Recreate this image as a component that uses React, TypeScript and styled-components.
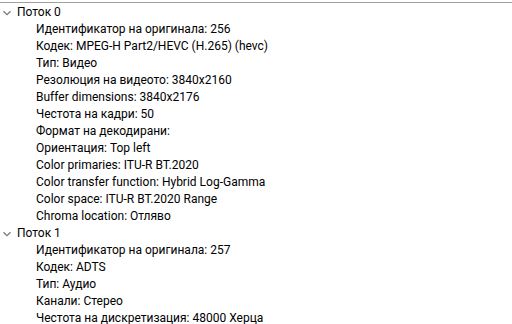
import styled, { createGlobalStyle } from "styled-components";

const GlobalStyle = createGlobalStyle`
  html, body {
    margin: 0;
    padding: 0;
    background: #fff;
  }
  body {
    font-family: Roboto, "Noto Sans", sans-serif;
    font-size: 12px;
    color: #000;
  }
`;

const Tree = styled.div`
  width: 512px;
  height: 324px;
  overflow: hidden;
  box-sizing: border-box;
  border-top: 1px solid #a0a0a0;
  margin-top: 2px;
  padding-top: 1px;
`;

const Node = styled.div<{ $level: number }>`
  display: flex;
  align-items: center;
  height: 17px;
  padding-left: ${(p) => (p.$level === 0 ? 2 : 36)}px;
  white-space: nowrap;
`;

const Toggle = styled.span`
  display: inline-flex;
  align-items: center;
  justify-content: center;
  width: 10px;
  height: 17px;
  margin-right: 5px;
`;

const Label = styled.span`
  line-height: 17px;
`;

type Stream = { title: string; props: string[] };

const streams: Stream[] = [
  {
    title: "Поток 0",
    props: [
      "Идентификатор на оригинала: 256",
      "Кодек: MPEG-H Part2/HEVC (H.265) (hevc)",
      "Тип: Видео",
      "Резолюция на видеото: 3840x2160",
      "Buffer dimensions: 3840x2176",
      "Честота на кадри: 50",
      "Формат на декодирани:",
      "Ориентация: Top left",
      "Color primaries: ITU-R BT.2020",
      "Color transfer function: Hybrid Log-Gamma",
      "Color space: ITU-R BT.2020 Range",
      "Chroma location: Отляво",
    ],
  },
  {
    title: "Поток 1",
    props: [
      "Идентификатор на оригинала: 257",
      "Кодек: ADTS",
      "Тип: Аудио",
      "Канали: Стерео",
      "Честота на дискретизация: 48000 Херца",
    ],
  },
];

const Chevron = () => (
  <svg width="8" height="6" viewBox="0 0 8 6">
    <path d="M0.5 1.2 L4 4.6 L7.5 1.2" fill="none" stroke="#777" strokeWidth="1.2" />
  </svg>
);

export default function App() {
  return (
    <>
      <GlobalStyle />
      <Tree>
        {streams.map((s) => (
          <div key={s.title}>
            <Node $level={0}>
              <Toggle>
                <Chevron />
              </Toggle>
              <Label>{s.title}</Label>
            </Node>
            {s.props.map((p) => (
              <Node $level={1} key={p}>
                <Label>{p}</Label>
              </Node>
            ))}
          </div>
        ))}
      </Tree>
    </>
  );
}
